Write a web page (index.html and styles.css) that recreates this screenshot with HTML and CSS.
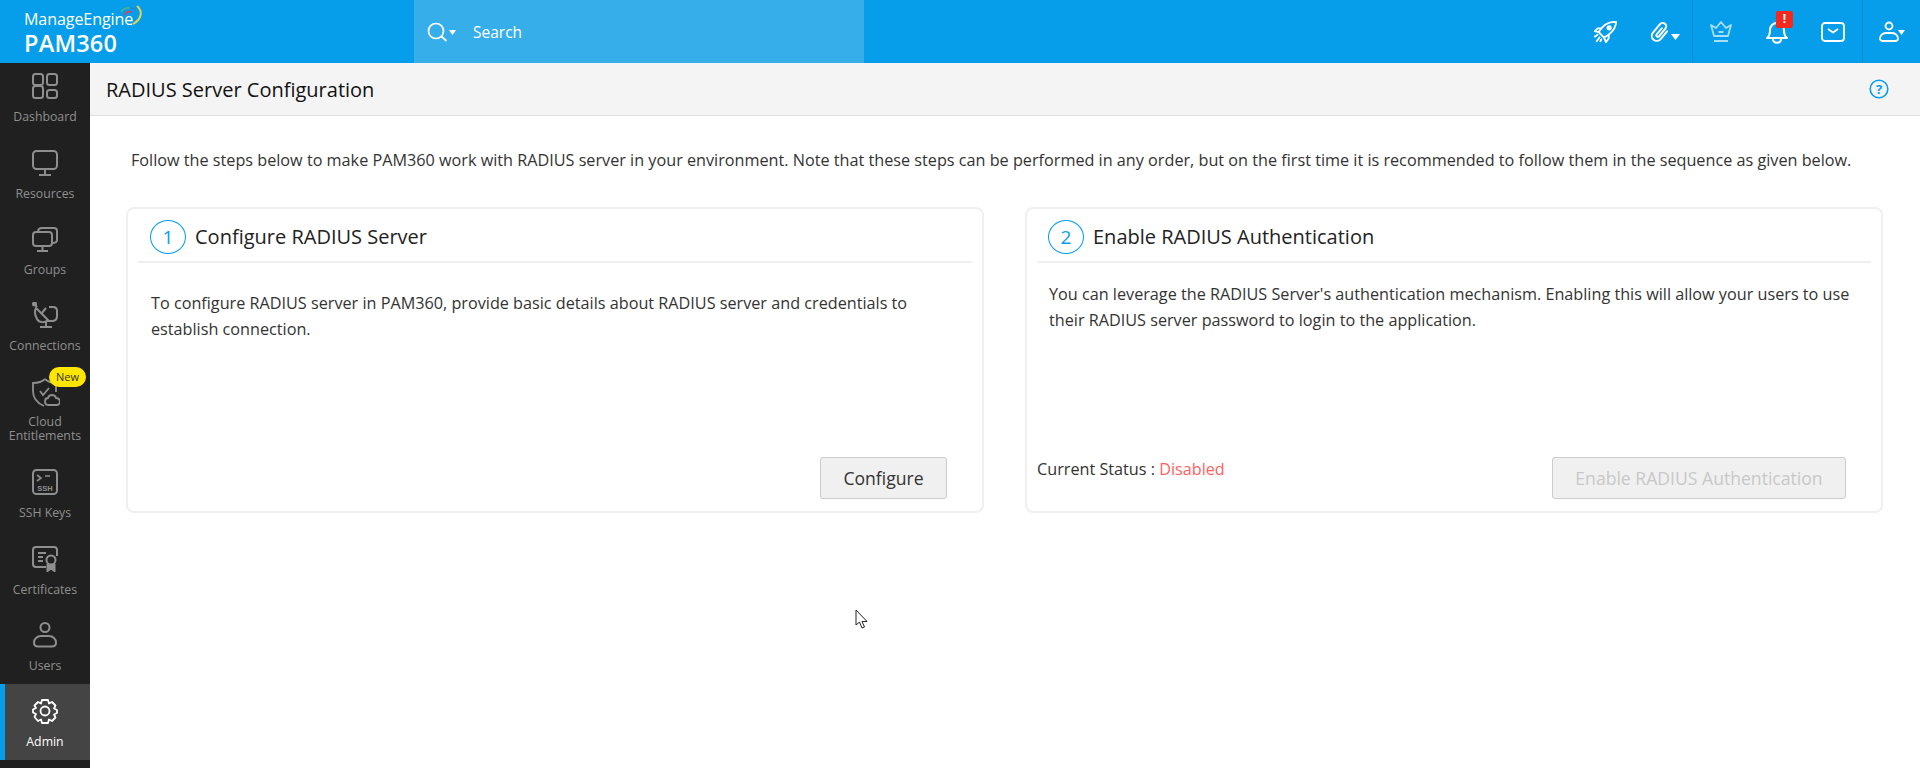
FILE: index.html
```html
<!DOCTYPE html>
<html lang="en">
<head>
<meta charset="utf-8">
<title>RADIUS Server Configuration</title>
<link rel="stylesheet" href="styles.css">
</head>
<body>
<header class="topbar">
  <div class="logo">
    <div class="logo-me">ManageEngine</div>
    <div class="logo-pam">PAM360</div>
    <svg class="logo-arc" width="30" height="26" viewBox="0 0 30 26" fill="none" stroke-width="1.6">
      <path d="M3 8 A9 9 0 0 1 12 4" stroke="#3fb58a"/>
      <path d="M6 11 A7 7 0 0 1 14 8" stroke="#d2426a"/>
      <path d="M12 4 A9 9 0 0 1 18 6" stroke="#2f7fc4"/>
      <path d="M19 2 C25 7 24 15 15 20" stroke="#e8d44a" stroke-width="2"/>
    </svg>
  </div>
  <div class="search">
    <svg class="search-icon" width="24" height="24" viewBox="0 0 24 24" fill="none" stroke="#fff" stroke-width="1.7"><circle cx="10" cy="11" r="7.5"/><path d="M15.5 16.5l5 4.5"/></svg>
    <svg class="caret" width="7" height="5" viewBox="0 0 7 5"><path d="M0 0h7L3.500 5z" fill="#fff"/></svg>
    <span class="search-text">Search</span>
  </div>
  <div class="top-icons">
    <div class="ti ti-rocket"><svg width="24" height="24" viewBox="0 0 26 26" fill="none" stroke="#fff" stroke-width="2" stroke-linejoin="round" stroke-linecap="round"><path d="M25 2c-6 0-11 1-15 6l-4 5 6 6 5-3c5-4 8-8 8-14z"/><circle cx="17.500" cy="8.500" r="1.800" fill="#fff"/><path d="M9 9H5l-3 3 4 1M17 16v4l-3 4-2-5"/><path d="M5 16l-3 2M7 19l-3 4M9 21l-1 2"/></svg></div>
    <div class="ti ti-link"><svg width="24" height="24" viewBox="0 0 24 24" fill="none" stroke="#fff" stroke-width="2" stroke-linecap="round"><path d="M17 7v10a5 5 0 0 1-10 0V6a3.500 3.500 0 0 1 7 0v10a1.500 1.500 0 0 1-3 0V8" transform="rotate(40 12 12)"/></svg><svg class="caret-small" width="9" height="6" viewBox="0 0 9 6"><path d="M0 0h9L4.500 6z" fill="#fff"/></svg></div>
    <div class="ti ti-crown"><svg width="24" height="24" viewBox="0 0 24 24" fill="none" stroke="#a6def8" stroke-width="1.800" stroke-linejoin="round"><path d="M5 16L2 5l5 3 5-6 5 6 5-3-3 11z"/><path d="M9.500 12h5M5 21h14"/></svg></div>
    <div class="ti ti-bell"><svg width="24" height="26" viewBox="0 0 24 26" fill="none" stroke="#fff" stroke-width="2" stroke-linejoin="round"><path d="M2 19c3-2 3-5 3-8 0-4 3-7 7-7s7 3 7 7c0 3 0 6 3 8z"/><path d="M8 20c0 5 8 5 8 0"/></svg><span class="badge">!</span></div>
    <div class="ti ti-mail"><svg width="24" height="22" viewBox="0 0 24 22" fill="none" stroke="#fff" stroke-width="1.800" stroke-linejoin="round"><rect x="1" y="2" width="22" height="18" rx="3"/><path d="M7 8l5 3.500L17 8"/></svg></div>
    <div class="ti ti-user"><svg width="20" height="22" viewBox="0 0 20 22" fill="none" stroke="#fff" stroke-width="1.800"><circle cx="10" cy="5" r="3.500"/><path d="M7 12h6c4 0 6 3 6 5.500 0 1.500-1 2.500-3 2.500H4c-2 0-3-1-3-2.500C1 15 3 12 7 12z"/></svg><svg class="caret-small" width="7" height="5" viewBox="0 0 7 5"><path d="M0 0h7L3.500 5z" fill="#fff"/></svg></div>
  </div>
</header>
<div class="shell">
  <nav class="sidebar">
    <a class="nav first"><svg width="26" height="26" viewBox="0 0 26 26" fill="none" stroke="#8e8e8e" stroke-width="2"><rect x="1" y="1" width="10" height="11" rx="2.500"/><rect x="15" y="1" width="10" height="11" rx="2.500"/><rect x="1" y="13" width="10" height="12" rx="2.500"/><rect x="15" y="17" width="10" height="8" rx="2.500"/></svg><span>Dashboard</span></a>
    <a class="nav"><svg width="26" height="26" viewBox="0 0 26 26" fill="none" stroke="#8e8e8e" stroke-width="2"><rect x="1" y="1" width="24" height="18" rx="3.500"/><path d="M13 19v5M7 25h12"/></svg><span>Resources</span></a>
    <a class="nav"><svg width="26" height="26" viewBox="0 0 26 26" fill="none" stroke="#8e8e8e" stroke-width="2"><rect x="1" y="6" width="19" height="14" rx="3"/><path d="M6 6c0-3 1-4 4-4h12c2 0 3 1 3 3v9c0 2-1 3-5 3M10.500 20v4M5 25h11"/></svg><span>Groups</span></a>
    <a class="nav"><svg width="26" height="26" viewBox="0 0 26 26" fill="none" stroke="#8e8e8e" stroke-width="2"><path d="M4 6l12 12c-3 3-9 3-11-1S2 9 4 6z"/><path d="M9 12l5-6M2 1l3 4"/><circle cx="2.500" cy="2" r="1.500"/><path d="M17 5h4c3 0 4 1 4 4v5c0 3-2 5-5 5h-5M14 20v4M8 25h12"/></svg><span>Connections</span></a>
    <a class="nav tall"><svg width="30" height="30" viewBox="0 0 30 30" fill="none" stroke="#8e8e8e" stroke-width="1.800"><path d="M15 2c3 3 6 4 11 4v9M15 2C12 5 8 6 3 6v8c0 7 4 12 11 15"/><path d="M10 14l3 4 6-7"/><path d="M18 28h9c4 0 4-7-1-7-1-4-7-4-8 0-4 0-4 7 0 7z" fill="#202020"/></svg><span>Cloud<br>Entitlements</span><b class="new">New</b></a>
    <a class="nav"><svg width="26" height="26" viewBox="0 0 26 26" fill="none" stroke="#8e8e8e" stroke-width="2"><rect x="1" y="1" width="24" height="24" rx="3.500"/><path d="M5 6l4 3-4 3M13 7h5" stroke-width="1.600"/><text class="ssh" x="13" y="21.500" text-anchor="middle">SSH</text></svg><span>SSH Keys</span></a>
    <a class="nav low"><svg width="26" height="26" viewBox="0 0 26 26" fill="none" stroke="#8e8e8e" stroke-width="2"><path d="M14 21H4c-2 0-3-1-3-3V4c0-2 1-3 3-3h18c2 0 3 1 3 3v6"/><path d="M6 7h8M6 11h5M6 15h5" stroke-width="1.800"/><circle cx="19" cy="14" r="4.500"/><path d="M15.500 18v7l3.500-2.500 3.500 2.500v-7" fill="#8e8e8e"/></svg><span>Certificates</span></a>
    <a class="nav low"><svg width="26" height="26" viewBox="0 0 26 26" fill="none" stroke="#8e8e8e" stroke-width="2"><circle cx="13" cy="5.500" r="4.500"/><path d="M9 14h8c4 0 7 3 7 6.500 0 2.500-1.500 4-4 4H6c-2.500 0-4-1.500-4-4C2 17 5 14 9 14z"/></svg><span>Users</span></a>
    <a class="nav low active"><svg width="26" height="26" viewBox="0 0 26 26" fill="none" stroke="#fff" stroke-width="1.800" stroke-linejoin="round"><circle cx="13" cy="13" r="4.500"/><path d="M10 2h6l1 3.500 3-1.500 3.500 3.500-1.500 3 3 1.500v3l-3 1.500 1.500 3-3.500 3.500-3-1.500-1 3.500h-6l-1-3.500-3 1.500L2.500 19l1.500-3-3-1.500v-3l3-1.500L2.500 7.500 6 4l3 1.500z"/></svg><span>Admin</span></a>
  </nav>
  <main class="main">
    <div class="page-head">
      <h1>RADIUS Server Configuration</h1>
      <svg width="20" height="20" viewBox="0 0 20 20" fill="none" stroke="#069eea" stroke-width="1.600"><circle cx="10" cy="10" r="8.800"/><text class="help-q" x="10" y="14.500" text-anchor="middle">?</text></svg>
    </div>
    <div class="content">
      <p class="intro">Follow the steps below to make PAM360 work with RADIUS server in your environment. Note that these steps can be performed in any order, but on the first time it is recommended to follow them in the sequence as given below.</p>
      <div class="cards">
        <section class="card">
          <div class="card-head"><span class="num">1</span><h2>Configure RADIUS Server</h2></div>
          <p class="card-text one">To configure RADIUS server in PAM360, provide basic details about RADIUS server and credentials to establish connection.</p>
          <div class="card-foot end"><button class="btn">Configure</button></div>
        </section>
        <section class="card second">
          <div class="card-head"><span class="num">2</span><h2>Enable RADIUS Authentication</h2></div>
          <p class="card-text two">You can leverage the RADIUS Server's authentication mechanism. Enabling this will allow your users to use their RADIUS server password to login to the application.</p>
          <div class="card-foot"><div class="status">Current Status : <span class="off">Disabled</span></div><button class="btn disabled">Enable RADIUS Authentication</button></div>
        </section>
      </div>
    </div>
    <svg class="cursor" width="13" height="20" viewBox="0 0 13 20"><path d="M1 1v15l3.500-3 2.500 6 2.500-1-2.500-5.500H12z" fill="#fff" stroke="#222" stroke-width="1"/></svg>
  </main>
</div>
</body>
</html>
```
FILE: styles.css
```css
* { box-sizing: border-box; }
html, body { margin: 0; height: 768px; overflow: hidden; }
body { font-family: "Open Sans", sans-serif; color: #2b2b2b; background: #fff; display: flex; flex-direction: column; }

.topbar { height: 63px; flex: none; background: #069eea; display: flex; }
.logo { width: 414px; flex: none; padding: 11px 0 0 24px; color: #fff; position: relative; }
.logo-me { font-size: 16px; line-height: 16px; letter-spacing: -0.050px; }
.logo-pam { font-size: 23.500px; line-height: 26px; font-weight: 600; margin-top: 3px; letter-spacing: 0.200px; }
.logo-arc { position: absolute; left: 118px; top: 4px; }

.search { width: 450px; flex: none; background: #36aeea; display: flex; align-items: center; padding-left: 12px; color: #fff; }
.caret { margin: 2px 0 0 -1px; }
.search-text { font-size: 15.500px; margin-left: 17px; }

.top-icons { flex: 1; display: flex; justify-content: flex-end; }
.ti { position: relative; height: 63px; display: flex; align-items: center; justify-content: center; padding-top: 1px; }
.ti-rocket { width: 56px; padding-right: 4px; }
.ti-link { width: 58px; border-right: 1px solid #0a8ed2; padding-right: 8px; }
.ti-crown { width: 56px; }
.ti-bell { width: 56px; }
.ti-mail { width: 58px; border-right: 1px solid #0a8ed2; padding-right: 2px; }
.ti-user { width: 57px; padding-right: 6px; }
.caret-small { position: absolute; }
.ti-link .caret-small { left: 36px; top: 34px; }
.ti-user .caret-small { left: 35px; top: 30px; }
.badge { position: absolute; left: 27px; top: 11px; width: 17px; height: 17px; background: #f5281e; border-radius: 2px; color: #fff; font-size: 12px; font-weight: 700; line-height: 15px; text-align: center; }

.shell { flex: 1; display: flex; min-height: 0; position: relative; }
.sidebar { width: 90px; flex: none; background: #202020; display: flex; flex-direction: column; }
.nav { height: 76px; flex: none; display: flex; flex-direction: column; align-items: center; padding-top: 13px; color: #8f8f8f; font-size: 12.300px; line-height: 14px; text-align: center; position: relative; }
.nav svg { flex: none; margin-bottom: 11px; }
.nav.first { height: 74px; padding-top: 10px; }
.nav.tall { height: 91px; padding-top: 12px; }
.nav.tall svg { margin-bottom: 8px; }
.nav.low { padding-top: 14px; }
.nav.active { background: #444; color: #fff; border-left: 5px solid #069eea; padding-right: 5px; }
.new { position: absolute; left: 49px; top: 2px; width: 37px; height: 20px; border-radius: 10px; background: #ffe600; color: #333; font-size: 11px; font-weight: 400; line-height: 20px; }
.ssh { font: 700 7.500px "Liberation Sans", sans-serif; fill: #8e8e8e; stroke: none; }

.main { flex: 1; min-width: 0; display: flex; flex-direction: column; position: relative; }
.page-head { height: 53px; flex: none; background: #f4f4f4; border-bottom: 1px solid #e0e0e0; display: flex; align-items: center; justify-content: space-between; padding: 0 31px 0 16px; }
.page-head h1 { margin: 0; font-size: 20px; font-weight: 400; color: #111; }
.help-q { font: 700 13px "Open Sans", sans-serif; fill: #069eea; stroke: none; }

.content { padding: 33px 37px 0 36px; }
.intro { margin: 0 0 36px 5px; font-size: 16.220px; line-height: 22px; color: #333; white-space: nowrap; }
.cards { display: flex; gap: 41px; }
.card { width: 858px; height: 306px; flex: none; border: 2px solid #f0f0f0; border-radius: 8px; display: flex; flex-direction: column; padding: 0 10px; }
.card.second .card-head { padding-left: 11px; }
.card-head { height: 54px; flex: none; display: flex; align-items: center; padding: 3px 0 0 12px; border-bottom: 2px solid #efefef; }
.num { width: 36px; height: 34px; flex: none; border: 1px solid #069eea; border-radius: 50%; color: #069eea; font-size: 19px; line-height: 32px; text-align: center; }
.card-head h2 { margin: 0 0 0 9px; font-size: 20px; font-weight: 400; color: #222; }
.card-text { margin: 0; font-size: 16.200px; line-height: 26px; color: #333; }
.card-text.one { padding: 27px 13px 0; }
.card-text.two { padding: 18px 12px 0; }
.card-foot { margin-top: auto; margin-bottom: 12px; display: flex; justify-content: space-between; padding: 0 25px 0 0; }
.card-foot.end { justify-content: flex-end; }
.status { font-size: 16.200px; line-height: 22px; color: #333; margin-top: 1px; }
.off { color: #ff5f5f; }
.btn { height: 42px; padding: 0; font: 400 17.600px "Open Sans", sans-serif; color: #333; background: #f0f0f0; border: 1px solid #cbcbcb; border-radius: 3px; width: 127px; }
.btn.disabled { width: 294px; color: #c8c8c8; }

.cursor { position: absolute; left: 765px; top: 546px; }
```
